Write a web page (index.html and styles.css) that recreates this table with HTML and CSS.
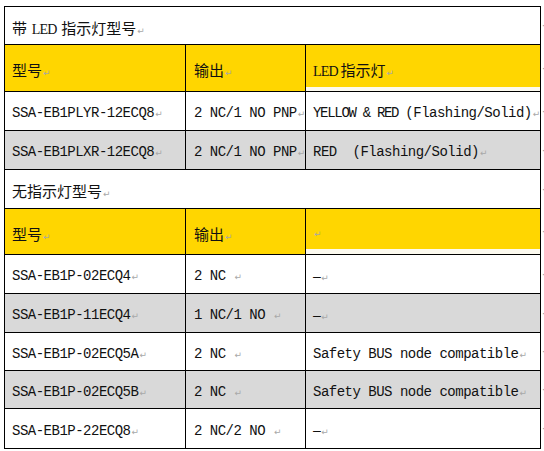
FILE: index.html
```html
<!DOCTYPE html>
<html lang="zh">
<head>
<meta charset="utf-8">
<link rel="stylesheet" href="styles.css">
</head>
<body>
<div class="page">
  <div class="sheet">
    <div class="cell title"><span class="t"><span class="cjk">带</span><span class="serif"> LED </span><span class="cjk">指示灯型号</span><span class="pm">↵</span></span></div>

    <div class="cell hdr"><span class="t"><span class="cjk">型号</span><span class="pm">↵</span></span></div>
    <div class="cell hdr c2"><span class="t"><span class="cjk">输出</span><span class="pm">↵</span></span></div>
    <div class="cell hdr hdr3"><span class="t"><span class="serif">LED </span><span class="cjk">指示灯</span><span class="pm">↵</span></span></div>

    <div class="cell data"><span class="t">SSA-EB1PLYR-12ECQ8<span class="pm">↵</span></span></div>
    <div class="cell data c2"><span class="t">2 NC/1 NO PNP<span class="pm">↵</span></span></div>
    <div class="cell data"><span class="t"><span class="tight">YELLOW &amp; RED </span>(Flashing/Solid)<span class="pm">↵</span></span></div>

    <div class="cell data gray"><span class="t">SSA-EB1PLXR-12ECQ8<span class="pm">↵</span></span></div>
    <div class="cell data gray c2"><span class="t">2 NC/1 NO PNP<span class="pm">↵</span></span></div>
    <div class="cell data gray"><span class="t">RED&nbsp; (Flashing/Solid)<span class="pm">↵</span></span></div>

    <div class="cell title"><span class="t"><span class="cjk">无指示灯型号</span><span class="pm">↵</span></span></div>

    <div class="cell hdr"><span class="t"><span class="cjk">型号</span><span class="pm">↵</span></span></div>
    <div class="cell hdr c2"><span class="t"><span class="cjk">输出</span><span class="pm">↵</span></span></div>
    <div class="cell hdr hdr3 short"><span class="t"><span class="pm">↵</span></span></div>

    <div class="cell data"><span class="t">SSA-EB1P-02ECQ4<span class="pm">↵</span></span></div>
    <div class="cell data c2"><span class="t">2 NC <span class="pm">↵</span></span></div>
    <div class="cell data"><span class="t"><span class="dash">–</span><span class="pm">↵</span></span></div>

    <div class="cell data gray"><span class="t">SSA-EB1P-11ECQ4<span class="pm">↵</span></span></div>
    <div class="cell data gray c2"><span class="t">1 NC/1 NO <span class="pm">↵</span></span></div>
    <div class="cell data gray"><span class="t"><span class="dash">–</span><span class="pm">↵</span></span></div>

    <div class="cell data"><span class="t">SSA-EB1P-02ECQ5A<span class="pm">↵</span></span></div>
    <div class="cell data c2"><span class="t">2 NC <span class="pm">↵</span></span></div>
    <div class="cell data"><span class="t">Safety BUS node compatible<span class="pm">↵</span></span></div>

    <div class="cell data gray"><span class="t">SSA-EB1P-02ECQ5B<span class="pm">↵</span></span></div>
    <div class="cell data gray c2"><span class="t">2 NC <span class="pm">↵</span></span></div>
    <div class="cell data gray"><span class="t">Safety BUS node compatible<span class="pm">↵</span></span></div>

    <div class="cell data"><span class="t">SSA-EB1P-22ECQ8<span class="pm">↵</span></span></div>
    <div class="cell data c2"><span class="t">2 NC/2 NO <span class="pm">↵</span></span></div>
    <div class="cell data"><span class="t"><span class="dash">–</span><span class="pm">↵</span></span></div>
  </div>
  <div class="marks">
    <span>·</span><span>·</span><span>·</span><span>·</span><span>·</span><span>·</span><span>·</span><span>·</span><span>·</span><span>·</span><span>·</span>
  </div>
</div>
</body>
</html>
```
FILE: styles.css
```css
html, body {
  margin: 0;
  padding: 0;
  background: #ffffff;
}

.page {
  display: flex;
  align-items: flex-start;
  padding: 6px 0 0 4px;
}

.sheet {
  display: grid;
  grid-template-columns: 180px 119px 234px;
  grid-template-rows: 37px 46px 38px 38px 38px 45px 38px 38px 37px 37px 39px;
  gap: 1px;
  padding: 1px;
  background: #000000;
  font-family: "Liberation Mono", "Noto Sans CJK SC", monospace;
  font-size: 14px;
  letter-spacing: -0.5px;
  color: #111111;
}

.marks {
  display: grid;
  grid-template-rows: 37px 46px 38px 38px 38px 45px 38px 38px 37px 37px 39px;
  row-gap: 1px;
  padding-top: 1px;
  width: 4px;
  font-family: "DejaVu Sans", sans-serif;
  font-size: 10px;
  color: #9a9a9a;
}

.marks span {
  display: flex;
  align-items: center;
  padding-left: 1px;
}

.cell {
  display: flex;
  align-items: center;
  background: #ffffff;
  padding: 4px 0 0 7px;
  white-space: nowrap;
  overflow: hidden;
}

.t {
  white-space: pre;
}

.c2 {
  padding-left: 8px;
}

.title {
  grid-column: 1 / 4;
  font-size: 15px;
  letter-spacing: 0;
}

.hdr {
  background: #ffd600;
  font-size: 15px;
  letter-spacing: 0;
}

.hdr3 {
  border-bottom: 4px solid #fcfaef;
  padding-top: 8px;
}

.hdr3.short {
  border-bottom-width: 5px;
}

.gray {
  background: #d9d9d9;
}

.cjk {
  font-family: "Noto Sans CJK SC", sans-serif;
  letter-spacing: 0;
}

.serif {
  font-family: "Liberation Serif", serif;
  font-size: 14px;
  letter-spacing: -0.8px;
}

.title .serif {
  word-spacing: 2px;
}

.tight {
  letter-spacing: -1.3px;
}

.dash {
  font-family: "Liberation Sans", sans-serif;
}

.pm {
  font-family: "DejaVu Sans", sans-serif;
  font-size: 9px;
  letter-spacing: 0;
  color: #a8a8a8;
  margin-left: 1px;
}
```
